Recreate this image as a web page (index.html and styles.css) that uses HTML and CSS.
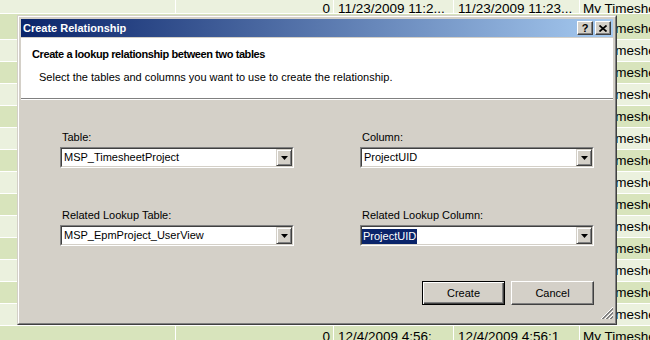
FILE: index.html
```html
<!DOCTYPE html>
<html lang="en">
<head>
  <meta charset="UTF-8">
  <meta name="viewport" content="width=device-width, initial-scale=1.0">
  <title>Create Relationship</title>
  <link rel="stylesheet" href="styles.css">
</head>
<body>
  <!-- Data grid behind the dialog -->
  <div class="sheet">
    <div class="row top light"><div class="cell"></div><div class="cell num">0</div><div class="cell">11/23/2009 11:2...</div><div class="cell">11/23/2009 11:23...</div><div class="cell">My Timesheet</div></div>
    <div class="row first green"><div class="cell"></div><div class="cell"></div><div class="cell"></div><div class="cell"></div><div class="cell">My Timesheet</div></div>
    <div class="row light"><div class="cell"></div><div class="cell"></div><div class="cell"></div><div class="cell"></div><div class="cell">My Timesheet</div></div>
    <div class="row green"><div class="cell"></div><div class="cell"></div><div class="cell"></div><div class="cell"></div><div class="cell">My Timesheet</div></div>
    <div class="row light"><div class="cell"></div><div class="cell"></div><div class="cell"></div><div class="cell"></div><div class="cell">My Timesheet</div></div>
    <div class="row green"><div class="cell"></div><div class="cell"></div><div class="cell"></div><div class="cell"></div><div class="cell">My Timesheet</div></div>
    <div class="row light"><div class="cell"></div><div class="cell"></div><div class="cell"></div><div class="cell"></div><div class="cell">My Timesheet</div></div>
    <div class="row green"><div class="cell"></div><div class="cell"></div><div class="cell"></div><div class="cell"></div><div class="cell">My Timesheet</div></div>
    <div class="row light"><div class="cell"></div><div class="cell"></div><div class="cell"></div><div class="cell"></div><div class="cell">My Timesheet</div></div>
    <div class="row green"><div class="cell"></div><div class="cell"></div><div class="cell"></div><div class="cell"></div><div class="cell">My Timesheet</div></div>
    <div class="row light"><div class="cell"></div><div class="cell"></div><div class="cell"></div><div class="cell"></div><div class="cell">My Timesheet</div></div>
    <div class="row green"><div class="cell"></div><div class="cell"></div><div class="cell"></div><div class="cell"></div><div class="cell">My Timesheet</div></div>
    <div class="row light"><div class="cell"></div><div class="cell"></div><div class="cell"></div><div class="cell"></div><div class="cell">My Timesheet</div></div>
    <div class="row green"><div class="cell"></div><div class="cell"></div><div class="cell"></div><div class="cell"></div><div class="cell">My Timesheet</div></div>
    <div class="row light"><div class="cell"></div><div class="cell"></div><div class="cell"></div><div class="cell"></div><div class="cell">My Timesheet</div></div>
    <div class="row green"><div class="cell"></div><div class="cell num">0</div><div class="cell">12/4/2009 4:56:</div><div class="cell">12/4/2009 4:56:1</div><div class="cell">My Timesheet</div></div>
  </div>

  <!-- Create Relationship dialog -->
  <div class="dialog">
    <div class="frame">
      <div class="titlebar">
        <span class="title">Create Relationship</span>
        <div class="caption-buttons">
          <button class="cap-btn">?</button>
          <button class="cap-btn"><svg width="8" height="7" viewBox="0 0 8 7"><path d="M0.5 0.5L7.5 6.5M7.5 0.5L0.5 6.5" stroke="#000" stroke-width="1.7"/></svg></button>
        </div>
      </div>

      <div class="header">
        <h1>Create a lookup relationship between two tables</h1>
        <p>Select the tables and columns you want to use to create the relationship.</p>
      </div>

      <div class="content">
        <div class="fields">
          <div class="field">
            <label>Table:</label>
            <div class="combo"><div class="combo-inner"><span class="combo-value">MSP_TimesheetProject</span><span class="combo-btn"><svg width="7" height="4" viewBox="0 0 7 4"><path d="M0 0h7L3.5 4z"/></svg></span></div></div>
          </div>
          <div class="field">
            <label>Column:</label>
            <div class="combo"><div class="combo-inner"><span class="combo-value">ProjectUID</span><span class="combo-btn"><svg width="7" height="4" viewBox="0 0 7 4"><path d="M0 0h7L3.5 4z"/></svg></span></div></div>
          </div>
          <div class="field">
            <label>Related Lookup Table:</label>
            <div class="combo"><div class="combo-inner"><span class="combo-value">MSP_EpmProject_UserView</span><span class="combo-btn"><svg width="7" height="4" viewBox="0 0 7 4"><path d="M0 0h7L3.5 4z"/></svg></span></div></div>
          </div>
          <div class="field">
            <label>Related Lookup Column:</label>
            <div class="combo"><div class="combo-inner"><span class="combo-value selected"><span class="sel">ProjectUID</span></span><span class="combo-btn"><svg width="7" height="4" viewBox="0 0 7 4"><path d="M0 0h7L3.5 4z"/></svg></span></div></div>
          </div>
        </div>

        <div class="actions">
          <button class="btn default">Create</button>
          <button class="btn">Cancel</button>
        </div>
      </div>

      <!-- size grip -->
      <svg class="grip" width="12" height="12" viewBox="0 0 12 12">
        <path d="M12 0L0 12M12 4L4 12M12 8L8 12" stroke="#fff"/>
        <path d="M12 1L1 12M12 2L2 12M12 5L5 12M12 6L6 12M12 9L9 12M12 10L10 12" stroke="#808080"/>
      </svg>
    </div>
  </div>
</body>
</html>
```

FILE: styles.css
```css
* { margin: 0; padding: 0; box-sizing: border-box; }
body { width: 650px; height: 340px; overflow: hidden; position: relative; font-family: 'Liberation Sans', Arial, sans-serif; background: #ebf1de; color: #000; }

/* grid */
.sheet { font-size: 13.5px; }
.row { display: grid; grid-template-columns: 176px 158px 120px 126px 1fr; height: 22px; border-bottom: 1px solid #fff; line-height: 21px; }
.row.light { background: #ebf1de; }
.row.green { background: #d8e4bc; }
.row.top { height: 14px; }
.row.top .cell { line-height: 13px; padding-top: 2px; }
.row.first { height: 26px; align-items: end; }
.cell { border-right: 1px solid #fff; padding: 0 3px 0 4px; white-space: nowrap; overflow: hidden; }
.cell.num { text-align: right; }
.cell:last-child { border-right: none; padding-left: 3px; }

/* dialog */
.dialog { position: absolute; left: 17px; top: 15px; width: 600px; height: 310px; border: 1px solid; border-color: #d4d0c8 #404040 #404040 #d4d0c8; font-size: 11px; }
.frame { position: relative; height: 100%; display: flex; flex-direction: column; padding: 2px; background: #d4d0c8; border: 1px solid; border-color: #fff #808080 #808080 #fff; }
.titlebar { height: 18px; display: flex; align-items: center; justify-content: space-between; padding: 0 2px; background: linear-gradient(to right, #0a246a, #a6caf0); color: #fff; font-weight: bold; line-height: 18px; }
.caption-buttons { display: flex; gap: 2px; }
.cap-btn { width: 16px; height: 14px; display: flex; align-items: center; justify-content: center; background: #d4d0c8; border: 1px solid; border-color: #fff #404040 #404040 #fff; box-shadow: inset -1px -1px #808080; font: bold 11px 'Liberation Sans', Arial, sans-serif; color: #000; line-height: 12px; }

.header { margin-top: 1px; height: 61px; padding: 10px 0 0 11px; background: #fff; border-bottom: 1px solid #808080; }
.header h1 { font-size: 11px; line-height: 13px; letter-spacing: -0.4px; }
.header p { margin-top: 10px; padding-left: 7px; line-height: 13px; }

.content { flex: 1; padding: 31px 19px 0 39px; border-top: 1px solid #fff; }
.fields { display: grid; grid-template-columns: 234px 234px; column-gap: 66px; row-gap: 41px; }
.field label { display: block; line-height: 13px; padding-left: 2px; }
.combo { margin-top: 3px; height: 21px; border: 1px solid; border-color: #808080 #fff #fff #808080; }
.combo-inner { height: 100%; display: flex; background: #fff; border: 1px solid; border-color: #404040 #d4d0c8 #d4d0c8 #404040; }
.combo-value { flex: 1; padding-left: 2px; line-height: 17px; white-space: nowrap; overflow: hidden; }
.combo-value.selected { padding: 1px 0 0; }
.sel { display: inline-block; height: 15px; line-height: 15px; padding: 0 1px; background: #0a246a; color: #fff; }
.combo-btn { width: 16px; display: flex; align-items: center; justify-content: center; background: #d4d0c8; border: 1px solid; border-color: #d4d0c8 #404040 #404040 #d4d0c8; box-shadow: inset 1px 1px #fff, inset -1px -1px #808080; }

.actions { margin-top: 35px; display: flex; justify-content: flex-end; gap: 6px; }
.btn { width: 83px; height: 24px; background: #d4d0c8; border: 1px solid; border-color: #fff #404040 #404040 #fff; box-shadow: inset -1px -1px #808080; font: 11px 'Liberation Sans', Arial, sans-serif; color: #000; }
.btn.default { border-color: #000; box-shadow: inset 1px 1px #fff, inset -1px -1px #404040, inset -2px -2px #808080; }

.grip { position: absolute; right: 2px; bottom: 4px; }
```
